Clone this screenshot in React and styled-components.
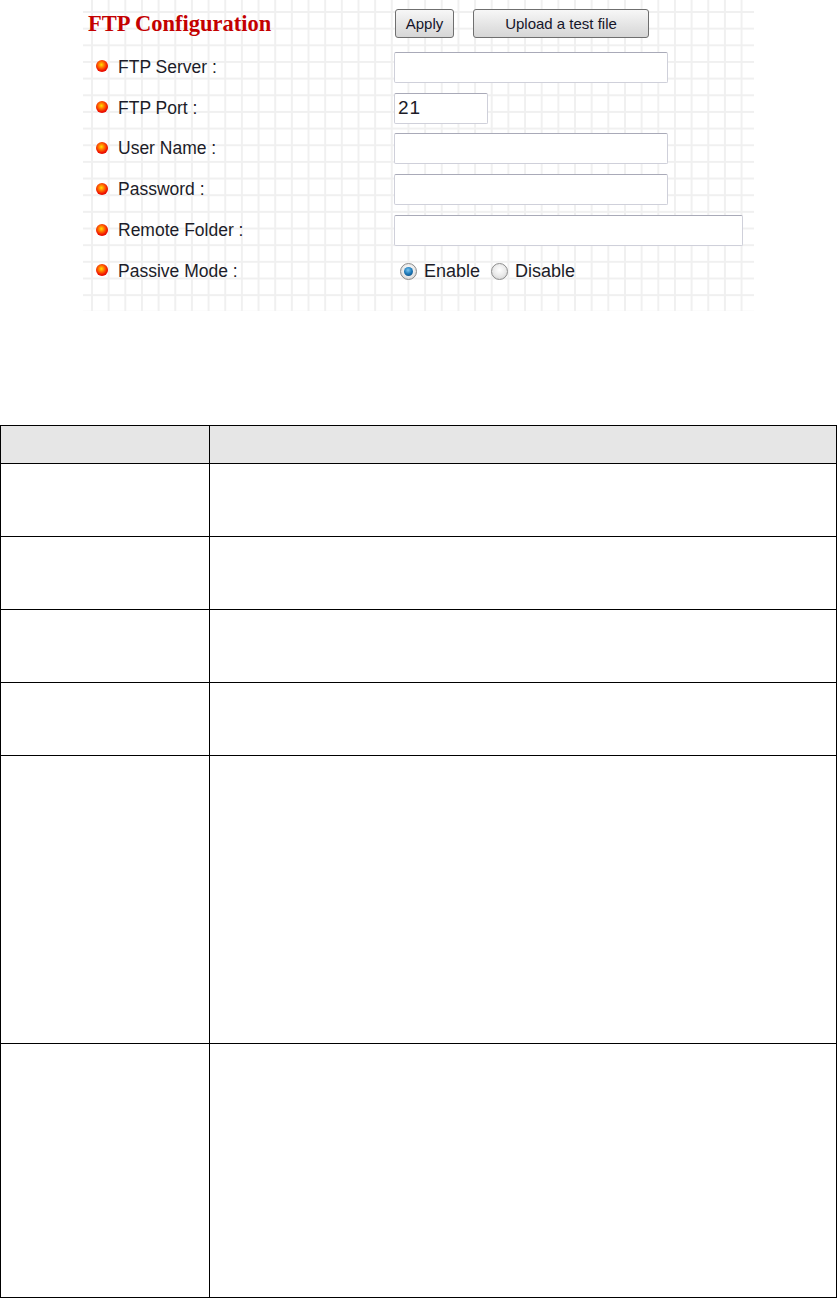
import React from 'react'
import styled, { createGlobalStyle } from 'styled-components'

const GlobalStyle = createGlobalStyle`
  html, body {
    margin: 0;
    padding: 0;
    background: #fff;
  }
  body {
    font-family: "Liberation Sans", Arial, sans-serif;
    color: #1c1c28;
  }
`

const fields = [
  { label: 'FTP Server :', width: 274 },
  { label: 'FTP Port :', width: 94, value: '21' },
  { label: 'User Name :', width: 274 },
  { label: 'Password :', width: 274 },
  { label: 'Remote Folder :', width: 349 },
]

// row heights of the description table below the screenshot
const tableRows = [38, 73, 73, 73, 73, 288, 254]

const App = () => {
  return (
    <Page>
      <GlobalStyle />
      <Shot>
        <Row $height={47}>
          <Title>FTP Configuration</Title>
          <Field>
            <Button $width={59}>Apply</Button>
            <Button $width={176}>Upload a test file</Button>
          </Field>
        </Row>
        {fields.map((f) => (
          <Row key={f.label}>
            <Label>
              <Bullet />
              {f.label}
            </Label>
            <Field>
              <TextBox $width={f.width} defaultValue={f.value || ''} />
            </Field>
          </Row>
        ))}
        <Row>
          <Label>
            <Bullet />
            Passive Mode :
          </Label>
          <Field>
            <RadioGroup>
              <RadioOption>
                <Radio $checked />
                Enable
              </RadioOption>
              <RadioOption>
                <Radio />
                Disable
              </RadioOption>
            </RadioGroup>
          </Field>
        </Row>
      </Shot>

      <Table>
        {tableRows.map((h, i) => (
          <React.Fragment key={i}>
            <Cell $height={h} $head={i === 0} />
            <Cell $height={h} $head={i === 0} />
          </React.Fragment>
        ))}
      </Table>
    </Page>
  )
}

const Page = styled.div`
  width: 837px;
  display: flex;
  flex-direction: column;
`

const Shot = styled.div`
  margin-left: 83px;
  width: 671px;
  height: 311px;
  display: flex;
  flex-direction: column;
  background-color: #fff;
  background-image:
    linear-gradient(to right, #f0f0f0 2px, transparent 2px),
    linear-gradient(to bottom, #f0f0f0 2px, transparent 2px);
  background-size: 16.67px 16.67px;
  background-position: 8px 11px;
`

const Row = styled.div`
  display: flex;
  align-items: center;
  height: ${(p) => p.$height || 40.8}px;
  flex-shrink: 0;
`

const Title = styled.h1`
  width: 306px;
  margin: 0;
  padding-left: 5px;
  padding-top: 1px;
  font-family: "Liberation Serif", "Times New Roman", serif;
  font-size: 22.5px;
  font-weight: bold;
  color: #c40000;
  line-height: 1;
`

const Label = styled.div`
  width: 297px;
  padding-left: 14px;
  display: flex;
  align-items: center;
  font-size: 17.5px;
  color: #1c1c28;
`

const Bullet = styled.span`
  width: 12px;
  height: 12px;
  border-radius: 50%;
  margin-left: -1px;
  margin-right: 10px;
  margin-top: -2px;
  background: radial-gradient(circle at 45% 40%, #ffe000 0, #ff7a00 28%, #f01000 62%, #c00000 100%);
`

const Field = styled.div`
  flex: 1;
  display: flex;
  align-items: center;
  gap: 18px;
`

const Button = styled.button`
  width: ${(p) => p.$width}px;
  height: 29px;
  margin-left: 1px;
  padding: 0;
  border: 1px solid #6f6f6f;
  border-radius: 3px;
  background: linear-gradient(#f7f7f7, #e6e6e6 50%, #d6d6d6);
  font-family: "Liberation Sans", Arial, sans-serif;
  font-size: 15px;
  color: #15152a;
`

const TextBox = styled.input`
  box-sizing: border-box;
  width: ${(p) => p.$width}px;
  height: 31px;
  padding: 0 3px;
  border: 1px solid #cfd0da;
  border-top-color: #a9aab8;
  border-radius: 2px;
  background: #fff;
  font-family: "Liberation Sans", Arial, sans-serif;
  font-size: 19px;
  letter-spacing: 1px;
  color: #1c1c28;
  outline: none;
`

const RadioGroup = styled.div`
  display: flex;
  align-items: center;
  gap: 11px;
  margin-left: 6px;
`

const RadioOption = styled.label`
  display: flex;
  align-items: center;
  gap: 7px;
  font-size: 18px;
  color: #1c1c28;
`

const Radio = styled.span`
  position: relative;
  width: 15px;
  height: 15px;
  border-radius: 50%;
  border: 1px solid #8c8c8c;
  background: radial-gradient(circle at 50% 40%, #ffffff 0, #e8e8e8 55%, #c8c8c8 100%);

  &::after {
    content: '';
    display: ${(p) => (p.$checked ? 'block' : 'none')};
    position: absolute;
    left: 3px;
    top: 3px;
    width: 9px;
    height: 9px;
    border-radius: 50%;
    background: radial-gradient(circle at 45% 35%, #7cc6ef 0, #1b78b8 50%, #0c3f6c 100%);
  }
`

const Table = styled.div`
  margin-top: 114px;
  display: grid;
  grid-template-columns: 209px 627px;
  border-top: 1px solid #000;
  border-left: 1px solid #000;
`

const Cell = styled.div`
  height: ${(p) => p.$height - 1}px;
  border-right: 1px solid #000;
  border-bottom: 1px solid #000;
  background: ${(p) => (p.$head ? '#e6e6e6' : '#fff')};
`

export default App
